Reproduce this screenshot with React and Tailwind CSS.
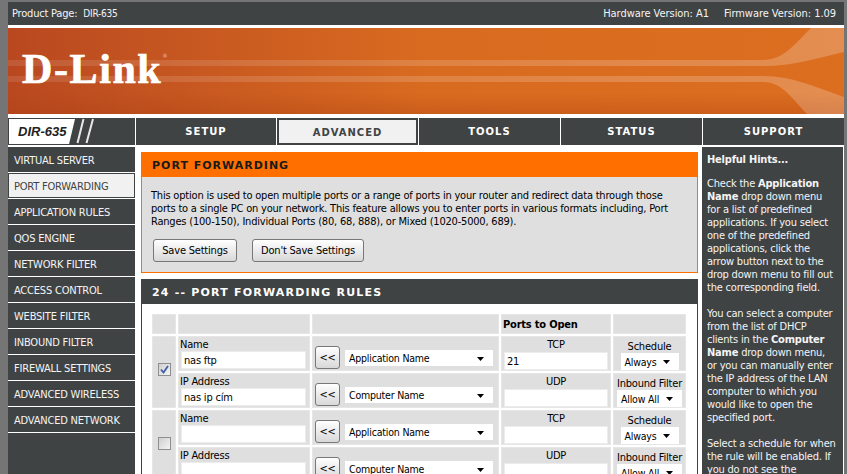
const tabs = [
  { label: 'SETUP', w: 'w-[140px]' },
  { label: 'ADVANCED', w: 'w-[141px]', active: true },
  { label: 'TOOLS', w: 'w-[141px]' },
  { label: 'STATUS', w: 'w-[141px]' },
  { label: 'SUPPORT', w: 'w-[141px]' },
];

const sideItems = [
  'VIRTUAL SERVER', 'PORT FORWARDING', 'APPLICATION RULES', 'QOS ENGINE', 'NETWORK FILTER',
  'ACCESS CONTROL', 'WEBSITE FILTER', 'INBOUND FILTER', 'FIREWALL SETTINGS', 'ADVANCED WIRELESS', 'ADVANCED NETWORK',
];

const rules = [
  { name: 'nas ftp', ip: 'nas ip cím', tcp: '21', checked: true },
  { name: '', ip: '', tcp: '', checked: false },
];

const body = { fontFamily: '"DejaVu Sans Condensed", "DejaVu Sans", sans-serif' };
const heading = { fontFamily: '"DejaVu Sans", sans-serif' };

function Box({ children, className = '' }) {
  return <div className={`bg-[#dfdfdf] border border-[#e6e6e6] ${className}`}>{children}</div>;
}

function Field({ value, className = '' }) {
  return (
    <input
      readOnly
      value={value}
      className={`h-[18px] bg-white border border-[#ececec] px-[2px] text-[11px] tracking-[-0.2px] text-black outline-none ${className}`}
      style={body}
    />
  );
}

function Drop({ label, className = '' }) {
  return (
    <div className={`flex items-center justify-between bg-white pl-[4px] pr-[9px] pt-[1px] leading-none text-black ${className}`}>
      <span className="whitespace-nowrap text-[10.5px]">{label}</span>
      <svg width="7" height="4" viewBox="0 0 7 4" className="shrink-0"><path d="M0 0h7L3.5 4z" fill="#000" /></svg>
    </div>
  );
}

function Arrows() {
  return (
    <button className="w-[25px] h-[23px] shrink-0 rounded-[3px] border border-[#777] bg-gradient-to-b from-white to-[#d8d8d8] leading-none text-black">
      &lt;&lt;
    </button>
  );
}

function Check({ checked }) {
  return (
    <div className="w-[13px] h-[13px] border border-[#8f8f8f] bg-gradient-to-br from-[#cfcfcf] to-[#f4f4f4] flex items-center justify-center">
      {checked && (
        <svg width="9" height="9" viewBox="0 0 9 9">
          <path d="M1 4.5 3.5 7.5 8 1" fill="none" stroke="#3f5fa8" strokeWidth="1.8" />
        </svg>
      )}
    </div>
  );
}

function Rule({ rule }) {
  return (
    <>
      <Box className="row-span-2 flex items-center justify-center pb-[5px]">
        <Check checked={rule.checked} />
      </Box>
      <Box className="pl-[1px] leading-[14px]">
        <div className="mt-[1px]">Name</div>
        <Field value={rule.name} className="w-[125px] ml-[1px] mt-[-1px] block" />
      </Box>
      <Box className="flex items-start gap-[5px] pl-[2px] pt-[9px]">
        <Arrows />
        <Drop label="Application Name" className="w-[148px] h-[16px] mt-[4px]" />
      </Box>
      <Box className="flex flex-col items-center leading-[14px]">
        <div className="mt-[1px]">TCP</div>
        <Field value={rule.tcp} className="w-[104px]" />
      </Box>
      <Box className="flex flex-col items-center leading-[14px]">
        <div className="mt-[3px]">Schedule</div>
        <Drop label="Always" className="w-[58px] h-[17px] pr-[4px] mt-[-1px]" />
      </Box>

      <Box className="pl-[1px] leading-[14px]">
        <div className="mt-[1px]">IP Address</div>
        <Field value={rule.ip} className="w-[125px] ml-[1px] mt-[-1px] block" />
      </Box>
      <Box className="flex items-start gap-[5px] pl-[2px] pt-[9px]">
        <Arrows />
        <Drop label="Computer Name" className="w-[148px] h-[16px] mt-[4px]" />
      </Box>
      <Box className="flex flex-col items-center leading-[14px]">
        <div className="mt-[1px]">UDP</div>
        <Field value="" className="w-[104px]" />
      </Box>
      <Box className="flex flex-col items-center leading-[14px]">
        <div className="mt-[3px] whitespace-nowrap">Inbound Filter</div>
        <Drop label="Allow All" className="w-[65px] h-[17px] pr-[4px] mt-[-1px]" />
      </Box>
    </>
  );
}

function Banner() {
  return (
    <div className="relative h-[86px] mt-[3px] bg-gradient-to-r from-[#b94820] via-[#d96b20] to-[#dc6e20] overflow-hidden">
      <svg className="absolute inset-0" width="836" height="86" viewBox="0 0 836 86">
        <defs>
          <linearGradient id="fade" x1="0" x2="1" y1="0" y2="0">
            <stop offset="0" stopColor="#fff" stopOpacity="0.1" />
            <stop offset="1" stopColor="#fff" stopOpacity="0.22" />
          </linearGradient>
          <linearGradient id="shade" x1="0" x2="0" y1="0" y2="1">
            <stop offset="0.75" stopColor="#a83c10" stopOpacity="0" />
            <stop offset="1" stopColor="#a83c10" stopOpacity="0.3" />
          </linearGradient>
        </defs>
        <rect width="836" height="86" fill="url(#shade)" />
        <path d="M0 32H755C775 32 785 18 803 0H836V24C810 30 785 38 755 38H0Z" fill="url(#fade)" />
        <path d="M0 48H755C785 48 810 60 836 69V86H799C785 72 775 54 755 54H0Z" fill="url(#fade)" />
      </svg>
      <div className="relative pl-[14px] pt-[18px] flex items-start text-white">
        <span
          className="text-[42px] leading-[46px] font-bold tracking-[1.6px] [-webkit-text-stroke:0.7px_white]"
          style={{ fontFamily: '"Liberation Serif", serif' }}
        >
          D-Link
        </span>
        <span className="text-[6px] leading-none mt-[7px] text-[#eeb9a0]">®</span>
      </div>
    </div>
  );
}

export default function App() {
  return (
    <div className="w-[847px] h-[474px] overflow-hidden bg-[#757575] pt-[2px] pl-[8px] pr-[3px] text-[11px] tracking-[-0.2px]" style={body}>
      <div className="bg-white h-[472px] overflow-hidden">
        <div className="h-[23px] bg-[#404344] flex items-center justify-between pl-[4px] pr-[8px] pt-[2px] text-[#f4f4f4]">
          <div>Product Page:&nbsp; <span className="text-[10px]">DIR-635</span></div>
          <div className="flex gap-[15px] tracking-[-0.05px]">
            <span>Hardware Version: A1</span>
            <span>Firmware Version: 1.09</span>
          </div>
        </div>

        <Banner />

        <div className="flex h-[27px] mt-[4px] gap-[1px]">
          <div className="w-[127px] shrink-0 bg-[#404344] p-[1px] relative">
            <div
              className="h-[25px] w-[66px] bg-white pl-[9px] text-[13px] leading-[25px] font-bold italic tracking-normal text-[#222]"
              style={{ fontFamily: '"Liberation Sans", sans-serif', clipPath: 'polygon(0 0, 100% 0, 91% 100%, 0 100%)' }}
            >
              DIR-635
            </div>
            <svg className="absolute left-[68px] top-0" width="30" height="27" viewBox="0 0 30 27">
              <path d="M1.5 25 7.5 1M10.5 25 17 1" stroke="#e8e8e8" strokeWidth="2" fill="none" />
            </svg>
          </div>
          {tabs.map((t) => (
            <div
              key={t.label}
              className={`${t.w} shrink-0 text-center text-[10px] font-bold tracking-[1px] ${
                t.active
                  ? 'bg-[#f1f1f1] text-[#404344] border-2 border-[#404344] leading-[25px]'
                  : 'bg-[#404344] text-white leading-[28px]'
              }`}
              style={heading}
            >
              {t.label}
            </div>
          ))}
        </div>

        <div className="flex mt-[2px] h-[327px]">
          <div className="w-[127px] shrink-0 bg-[#404344]">
            {sideItems.map((s) => (
              <div key={s} className="h-[26px] border-b border-white">
                {s === 'PORT FORWARDING' ? (
                  <div className="h-full bg-[#f1f1f1] text-[#404344] border border-[#404344] pl-[5px] leading-[26px]">{s}</div>
                ) : (
                  <div className="h-full pl-[6px] leading-[28px] text-[#f4f4f4]">{s}</div>
                )}
              </div>
            ))}
          </div>

          <div className="w-[567px] shrink-0 pl-[6px] pr-[4px] pt-[5px] text-black">
            <div className="h-[121px] w-[557px] bg-[#dfdfdf] border border-[#ff6f00]">
              <h1 className="h-[24px] bg-[#ff6f00] pl-[10px] text-[11px] leading-[25px] font-bold tracking-[1px] text-[#1a1a1a]" style={heading}>
                PORT FORWARDING
              </h1>
              <p className="pl-[9px] pt-[12px] leading-[13px] whitespace-nowrap">
                This option is used to open multiple ports or a range of ports in your router and redirect data through those
                <br />
                ports to a single PC on your network. This feature allows you to enter ports in various formats including, Port
                <br />
                Ranges (100-150), Individual Ports (80, 68, 888), or Mixed (1020-5000, 689).
              </p>
              <div className="flex gap-[15px] pl-[11px] pt-[11px]">
                <button className="h-[23px] w-[84px] rounded-[3px] border border-[#777] bg-gradient-to-b from-white to-[#d8d8d8] leading-none">
                  Save Settings
                </button>
                <button className="h-[23px] w-[112px] rounded-[3px] border border-[#777] bg-gradient-to-b from-white to-[#d8d8d8] leading-none">
                  Don't Save Settings
                </button>
              </div>
            </div>

            <div className="mt-[6px] w-[557px] h-[200px] border border-[#404344]">
              <h2 className="h-[24px] bg-[#404344] pl-[10px] text-[11px] leading-[25px] font-bold tracking-[1.2px] text-white" style={heading}>
                24 -- PORT FORWARDING RULES
              </h2>
              <div className="ml-[10px] mt-[10px] grid grid-cols-[24px_132px_187px_110px_73px] grid-rows-[20px_35px_35px_35px_35px] gap-[2px]">
                <Box />
                <Box />
                <Box />
                <Box className="pl-[1px] font-bold leading-[20px]">Ports to Open</Box>
                <Box />
                {rules.map((r, i) => (
                  <Rule key={i} rule={r} />
                ))}
              </div>
            </div>
          </div>

          <div className="w-[141px] shrink-0 bg-[#404344] pl-[5px] pt-[6px] leading-[13px] text-[#f4f4f4] whitespace-nowrap">
            <div className="font-bold">Helpful Hints...</div>
            <p className="mt-[11px]">
              Check the <b>Application</b>
              <br />
              <b>Name</b> drop down menu
              <br />
              for a list of predefined
              <br />
              applications. If you select
              <br />
              one of the predefined
              <br />
              applications, click the
              <br />
              arrow button next to the
              <br />
              drop down menu to fill out
              <br />
              the corresponding field.
            </p>
            <p className="mt-[13px]">
              You can select a computer
              <br />
              from the list of DHCP
              <br />
              clients in the <b>Computer</b>
              <br />
              <b>Name</b> drop down menu,
              <br />
              or you can manually enter
              <br />
              the IP address of the LAN
              <br />
              computer to which you
              <br />
              would like to open the
              <br />
              specified port.
            </p>
            <p className="mt-[13px]">
              Select a schedule for when
              <br />
              the rule will be enabled. If
              <br />
              you do not see the
              <br />
              schedule you need in the
            </p>
          </div>
        </div>
      </div>
    </div>
  );
}
